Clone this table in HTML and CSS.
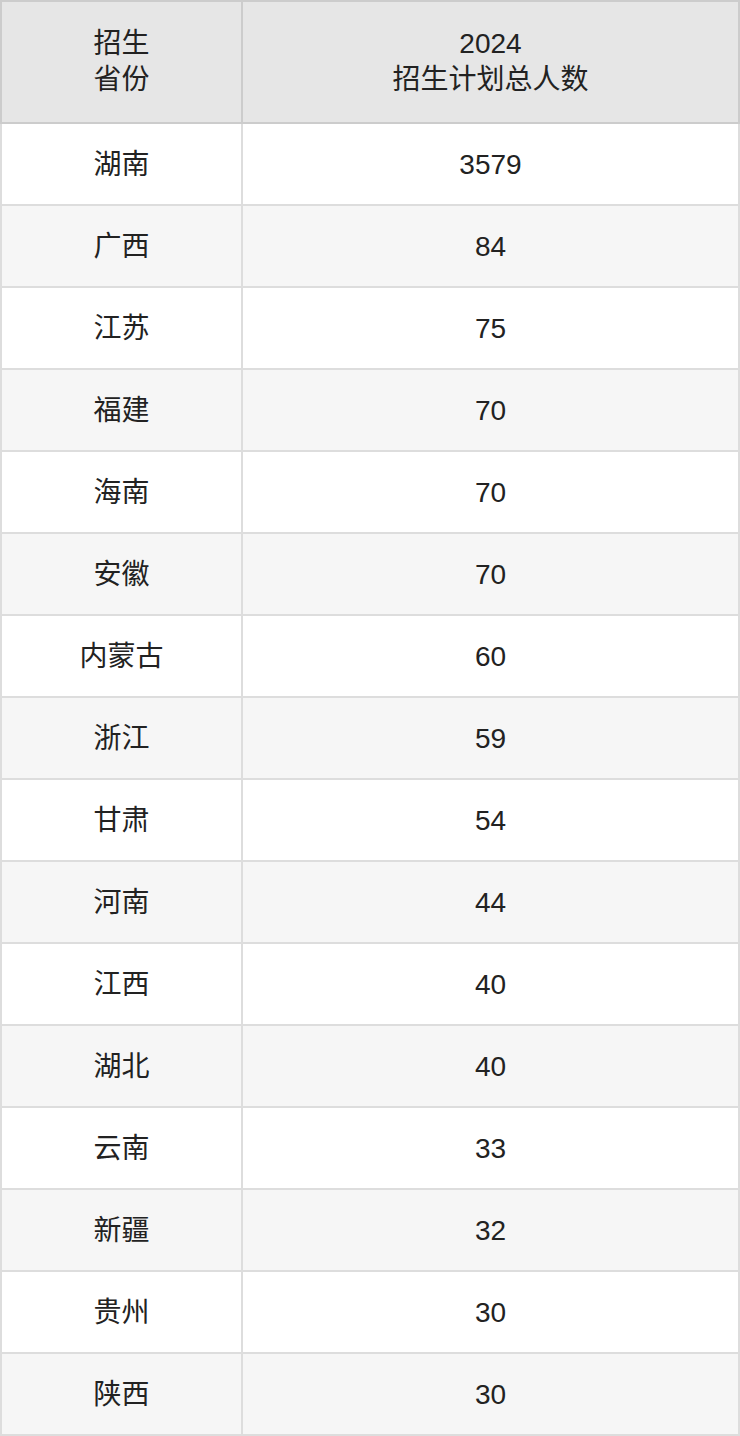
FILE: index.html
```html
<!DOCTYPE html>
<html lang="zh-CN">
<head>
<meta charset="utf-8">
<title>2024招生计划</title>
<link rel="stylesheet" href="styles.css">
</head>
<body>
<table class="plan">
  <colgroup><col class="c1"><col class="c2"></colgroup>
  <thead>
    <tr><th>招生<br>省份</th><th>2024<br>招生计划总人数</th></tr>
  </thead>
  <tbody>
    <tr><td>湖南</td><td>3579</td></tr>
    <tr><td>广西</td><td>84</td></tr>
    <tr><td>江苏</td><td>75</td></tr>
    <tr><td>福建</td><td>70</td></tr>
    <tr><td>海南</td><td>70</td></tr>
    <tr><td>安徽</td><td>70</td></tr>
    <tr><td>内蒙古</td><td>60</td></tr>
    <tr><td>浙江</td><td>59</td></tr>
    <tr><td>甘肃</td><td>54</td></tr>
    <tr><td>河南</td><td>44</td></tr>
    <tr><td>江西</td><td>40</td></tr>
    <tr><td>湖北</td><td>40</td></tr>
    <tr><td>云南</td><td>33</td></tr>
    <tr><td>新疆</td><td>32</td></tr>
    <tr><td>贵州</td><td>30</td></tr>
    <tr><td>陕西</td><td>30</td></tr>
  </tbody>
</table>
</body>
</html>
```

FILE: styles.css
```css
html, body {
  margin: 0;
  padding: 0;
  background: #ffffff;
}
.plan {
  width: 740px;
  border-collapse: collapse;
  table-layout: fixed;
  font-family: "Liberation Sans", "Noto Sans CJK SC", sans-serif;
  font-size: 28px;
  line-height: 36px;
  color: #222222;
}
.c1 { width: 241px; }
.plan th,
.plan td {
  text-align: center;
  vertical-align: middle;
  padding: 0;
  font-weight: normal;
}
.plan th {
  background: #e6e6e6;
  border: 2px solid #cccccc;
  height: 120px;
}
.plan td {
  border: 2px solid #dddddd;
  height: 78px;
  padding-top: 2px;
}
.plan tbody tr:nth-child(even) td {
  background: #f6f6f6;
}
```
